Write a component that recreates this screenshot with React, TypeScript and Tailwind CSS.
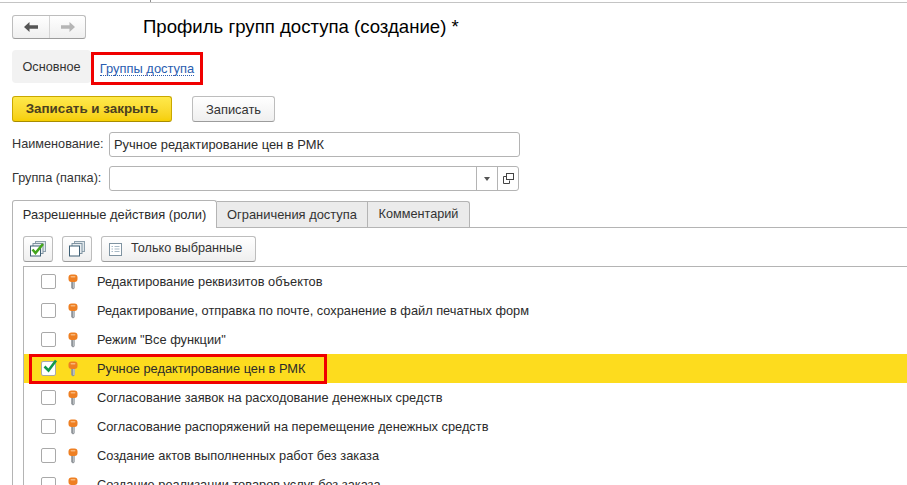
import React from 'react';

const roles = [
  'Редактирование реквизитов объектов',
  'Редактирование, отправка по почте, сохранение в файл печатных форм',
  'Режим "Все функции"',
  'Ручное редактирование цен в РМК',
  'Согласование заявок на расходование денежных средств',
  'Согласование распоряжений на перемещение денежных средств',
  'Создание актов выполненных работ без заказа',
  'Создание реализации товаров услуг без заказа',
];

function KeyIcon() {
  return (
    <svg width="10" height="16" viewBox="0 0 10 16" className="shrink-0">
      <path d="M3.2 7 H6.8 V14 L5 15.5 L3.2 14 Z" fill="#8f9499" />
      <rect x="5" y="7" width="1.8" height="7" fill="#b9bdc0" />
      <rect x="0.5" y="0.5" width="9" height="7.5" rx="3" fill="#ee7f22" />
      <rect x="2.5" y="2" width="5" height="1.6" rx="0.8" fill="#f9b678" />
    </svg>
  );
}

function Row({ text, checked }: { text: string; checked: boolean }) {
  return (
    <div className={`relative flex h-[29px] items-center pl-[17px] ${checked ? 'bg-[#fddc1e]' : ''}`}>
      <div className="relative mr-[12px] h-[15px] w-[15px] shrink-0 rounded-[2px] border border-[#a9a9a9] bg-white">
        {checked && (
          <svg width="17" height="15" viewBox="0 0 17 15" className="absolute -top-[3px] left-0">
            <path d="M2.5 7.5 L6.5 11.5 L14 1.5" fill="none" stroke="#12984a" strokeWidth="2.6" />
          </svg>
        )}
      </div>
      <KeyIcon />
      <span className="ml-[19px] whitespace-nowrap pt-px text-[12.8px] text-[#2b2b2b]">{text}</span>
    </div>
  );
}

function StackIcon({ checked }: { checked?: boolean }) {
  return (
    <svg width="16" height="16" viewBox="0 0 16 16">
      <rect x="5.5" y="0.5" width="10" height="10" fill="#dfe6ea" stroke="#8ea0ac" />
      <rect x="3" y="2.5" width="10" height="10" fill="#e9eef1" stroke="#7f93a1" />
      <rect x="0.5" y="5" width="10" height="10" fill="#fff" stroke="#3f5f75" />
      {checked && <path d="M2.5 8.5 L5.5 12 L13 3" fill="none" stroke="#43a51c" strokeWidth="2.6" />}
    </svg>
  );
}

const toolBtn = 'flex h-[26px] items-center justify-center rounded-[3px] border border-[#bdbdbd] border-b-[#9c9c9c] bg-gradient-to-b from-white to-[#efefef]';

export default function App() {
  return (
    <div className="h-[485px] w-[907px] overflow-hidden bg-white text-[12.9px] text-[#333] [font-family:'Liberation_Sans',Arial,sans-serif]">
      {/* top edge */}
      <div className="flex h-[3px] border-b border-[#c4c4c4]">
        <div className="w-[151px] border-r border-[#8f8f8f]" />
      </div>

      {/* history + title */}
      <div className="mt-[12px] flex h-[24px] items-center pl-[12px]">
        <div className="flex h-[24px] w-[74px] rounded-[3px] border border-[#bdbdbd] border-b-[#9c9c9c] bg-gradient-to-b from-white to-[#efefef]">
          <div className="flex w-[37px] items-center justify-center border-r border-[#d4d4d4]">
            <svg width="14" height="10" viewBox="0 0 14 10">
              <path d="M0 5 L5.5 0 V3.2 H14 V6.8 H5.5 V10 Z" fill="#555" />
            </svg>
          </div>
          <div className="flex flex-1 items-center justify-center">
            <svg width="14" height="10" viewBox="0 0 14 10">
              <path d="M14 5 L8.5 0 V3.2 H0 V6.8 H8.5 V10 Z" fill="#b5b5b5" />
            </svg>
          </div>
        </div>
        <h1 className="ml-[57px] text-[18.6px] leading-[24px] font-normal text-black">Профиль групп доступа (создание) *</h1>
      </div>

      {/* page tabs */}
      <div className="mt-[11px] flex h-[35px] pl-[12px]">
        <div className="flex h-[33px] w-[79px] items-center justify-center rounded-[4px] bg-[#f2f2f2] pt-[2px] text-[12.7px] text-[#333]">Основное</div>
        <div className="mt-[2px] flex h-[33px] w-[112px] items-center justify-center border-[3px] border-[#f00000]">
          <span className="border-b border-dotted border-[#2a5db0] leading-[13px] whitespace-nowrap text-[#2a5db0]">Группы доступа</span>
        </div>
      </div>

      {/* command bar */}
      <div className="mt-[11px] flex h-[26px] items-center pl-[12px]">
        <button className="h-[26px] w-[160px] rounded-[3px] border border-[#c9a800] border-b-[#a88c00] bg-gradient-to-b from-[#ffe94a] to-[#f6cf00] pt-px text-[13.4px] font-bold text-[#4a4020]">
          Записать и закрыть
        </button>
        <button className="ml-[20px] h-[26px] w-[83px] rounded-[3px] border border-[#bdbdbd] border-b-[#9c9c9c] bg-gradient-to-b from-white to-[#efefef] pt-px text-[#333]">
          Записать
        </button>
      </div>

      {/* fields */}
      <div className="mt-[10px] flex h-[25px] items-center pl-[12px]">
        <label className="w-[97px] whitespace-nowrap pt-px text-[12.7px]">Наименование:</label>
        <div className="flex h-[25px] w-[411px] items-center rounded-[3px] border border-[#b4b4b4] pl-[4px] pt-px text-[#2b2b2b]">
          Ручное редактирование цен в РМК
        </div>
      </div>
      <div className="mt-[9px] flex h-[25px] items-center pl-[12px]">
        <label className="w-[97px] whitespace-nowrap pt-px text-[12.7px]">Группа (папка):</label>
        <div className="flex h-[25px] w-[410px] rounded-[3px] border border-[#b4b4b4]">
          <div className="flex-1" />
          <div className="flex w-[21px] items-center justify-center border-l border-[#b4b4b4]">
            <div className="h-0 w-0 border-x-[3px] border-t-[4px] border-x-transparent border-t-[#555]" />
          </div>
          <div className="flex w-[21px] items-center justify-center border-l border-[#b4b4b4]">
            <svg width="11" height="11" viewBox="0 0 11 11">
              <path d="M3.5 3.5 H0.5 V10.5 H6.5 V7.5" fill="none" stroke="#444" />
              <rect x="3.5" y="0.5" width="7" height="6" fill="none" stroke="#444" />
            </svg>
          </div>
        </div>
      </div>

      {/* tabs */}
      <div className="mt-[9px] flex h-[27px] items-end pl-[12px]">
        <div className="relative z-10 flex h-[28px] w-[205px] translate-y-px items-center justify-center whitespace-nowrap rounded-t-[3px] border border-b-0 border-[#b4b4b4] bg-white text-[#2b2b2b]">
          Разрешенные действия (роли)
        </div>
        <div className="flex h-[26px] w-[151px] items-center justify-center whitespace-nowrap border-r border-t border-[#b4b4b4] bg-[#ebebeb]">Ограничения доступа</div>
        <div className="flex h-[26px] w-[102px] items-center justify-center whitespace-nowrap rounded-tr-[3px] border-r border-t border-[#b4b4b4] bg-[#ebebeb] text-[12.7px]">Комментарий</div>
      </div>

      {/* tab body */}
      <div className="ml-[12px] h-[300px] border-l border-t border-[#b4b4b4] pl-[10px]">
        <div className="flex h-[38px] items-start gap-[9px] pt-[8px]">
          <div className={`${toolBtn} w-[30px]`}><StackIcon checked /></div>
          <div className={`${toolBtn} w-[30px]`}><StackIcon /></div>
          <div className={`${toolBtn} w-[155px] !justify-start gap-[9px] pl-[7px]`}>
            <svg width="13" height="13" viewBox="0 0 13 13">
              <rect x="0.5" y="0.5" width="12" height="12" fill="#fff" stroke="#7f93a1" />
              <path d="M2.5 3.5 H4 M5.5 3.5 H10.5 M2.5 6 H4 M5.5 6 H10.5 M2.5 8.5 H4 M5.5 8.5 H10.5" stroke="#a9bac6" />
            </svg>
            <span className="whitespace-nowrap text-[12.7px]">Только выбранные</span>
          </div>
        </div>
        <div className="relative border-l border-t border-[#b4b4b4]">
          {roles.map(role => (
            <Row key={role} text={role} checked={role === 'Ручное редактирование цен в РМК'} />
          ))}
          <div className="absolute left-[5px] top-[87px] h-[30px] w-[298px] border-[3px] border-[#f00000]" />
        </div>
      </div>
    </div>
  );
}
